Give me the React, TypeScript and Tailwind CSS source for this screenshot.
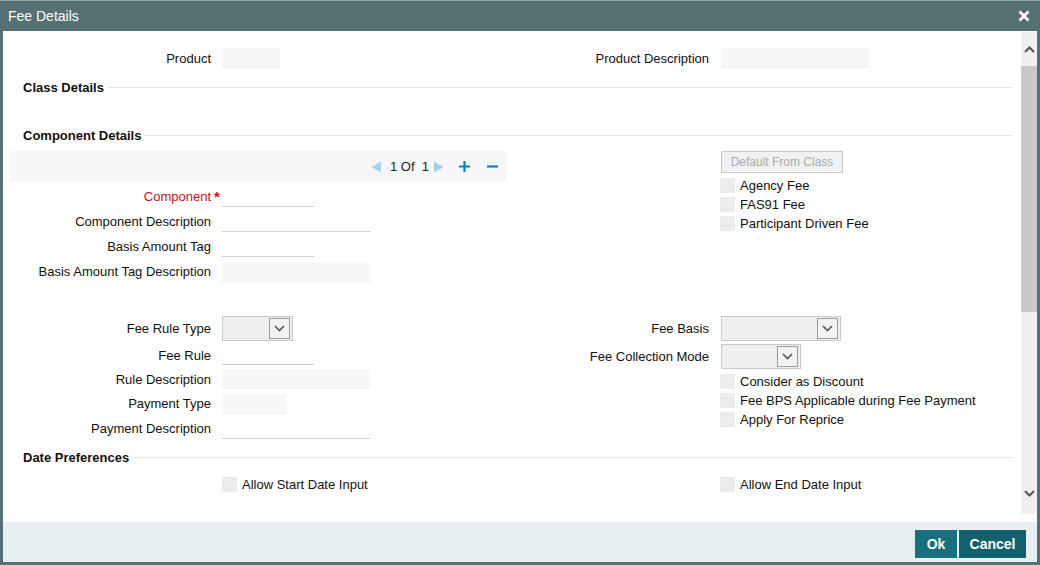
import type { JSX, ReactNode } from 'react';

const font = { fontFamily: '"Liberation Sans", Arial, sans-serif' };

function Label({ children, w }: { children: ReactNode; w: string }): JSX.Element {
  return <div className={`${w} relative shrink-0 pt-[1px] text-right text-[13px] text-[#111]`}>{children}</div>;
}

function LineInput({ w }: { w: string }): JSX.Element {
  return <div className={`${w} h-[20px] border-b border-[#cfcfcf]`} />;
}

function FilledInput({ w }: { w: string }): JSX.Element {
  return <div className={`${w} h-[20px] border-b border-[#efefef] bg-[#f7f7f7]`} />;
}

function Select({ w }: { w: string }): JSX.Element {
  return (
    <div className={`${w} flex h-[25px] items-center justify-end border border-[#c9c9c9] bg-[#efefed] pr-[2px]`}>
      <div className="flex h-[21px] w-[21px] items-center justify-center border border-[#9c9c9c] bg-[#f3f3f3]">
        <svg width="11" height="7" viewBox="0 0 11 7" fill="none">
          <path d="M1 1l4.5 4.5L10 1" stroke="#555" strokeWidth="1.6" />
        </svg>
      </div>
    </div>
  );
}

function Check({ label, ml }: { label: string; ml: string }): JSX.Element {
  return (
    <div className={`flex h-[19px] items-center ${ml}`}>
      <div className="h-[15px] w-[15px] bg-[#ececec]" />
      <span className="ml-[5px] pt-[1px] text-[13px] text-[#111]">{label}</span>
    </div>
  );
}

function Heading({ title, mt }: { title: string; mt: string }): JSX.Element {
  return (
    <div className={`flex h-[16px] items-center pl-[20px] pr-[9px] ${mt}`}>
      <span className="pt-[1px] text-[13px] font-bold text-[#111]">{title}</span>
      <div className="ml-[3px] h-px flex-1 bg-[#e6e6e6]" />
    </div>
  );
}

function Row({ h, children }: { h: string; children: ReactNode }): JSX.Element {
  return <div className={`flex items-center gap-[11px] ${h}`}>{children}</div>;
}

export default function App(): JSX.Element {
  return (
    <div style={font} className="flex h-[565px] w-[1040px] flex-col bg-[#557174] pb-[3px]">
      <div className="flex h-[31px] shrink-0 items-center justify-between border-t border-[#8ea4a8] px-[8px]">
        <span className="text-[14px] text-white">Fee Details</span>
        <svg width="12" height="12" viewBox="0 0 12 12" className="mr-[2px]">
          <path d="M1.5 1.5l9 9M10.5 1.5l-9 9" stroke="#fff" strokeWidth="2.6" />
        </svg>
      </div>

      <div className="mx-[3px] flex h-[491px] bg-white">
        <div className="flex-1">
          <div className="mt-[17px] flex h-[20px] items-center">
            <div className="flex w-[507px] items-center gap-[11px]">
              <Label w="w-[208px]">Product</Label>
              <FilledInput w="w-[58px]" />
            </div>
            <div className="flex items-center gap-[12px]">
              <Label w="w-[199px]">Product Description</Label>
              <FilledInput w="w-[148px]" />
            </div>
          </div>

          <Heading title="Class Details" mt="mt-[11px]" />
          <Heading title="Component Details" mt="mt-[32px]" />

          <div className="mt-[8px] flex">
            <div className="w-[507px]">
              <div className="ml-[7px] flex h-[31px] w-[497px] items-center bg-[#f6f7f8] pl-[361px]">
                <svg width="11" height="12" viewBox="0 0 11 12">
                  <path d="M10 0.5V11.5L0.5 6z" fill="#a3d2ea" />
                </svg>
                <span className="ml-[8px] text-[13px] text-[#222]">1 Of&nbsp; 1</span>
                <svg width="11" height="12" viewBox="0 0 11 12" className="ml-[4px]">
                  <path d="M1 0.5V11.5L10.5 6z" fill="#a3d2ea" />
                </svg>
                <svg width="13" height="13" viewBox="0 0 13 13" className="ml-[14px]">
                  <path d="M6.5 1v11M1 6.5h11" stroke="#127fc3" strokeWidth="2.2" />
                </svg>
                <svg width="13" height="13" viewBox="0 0 13 13" className="ml-[15px]">
                  <path d="M1 6.5h11" stroke="#127fc3" strokeWidth="2.2" />
                </svg>
              </div>
              <div className="mt-[2px]">
                <Row h="h-[25px]">
                  <Label w="w-[208px]">
                    <span className="text-[#dd0a2a]">Component</span>
                    <span className="absolute left-full top-[0px] ml-[3px] text-[15px] font-bold text-[#dd0a2a]">*</span>
                  </Label>
                  <LineInput w="w-[92px]" />
                </Row>
                <Row h="h-[25px]">
                  <Label w="w-[208px]">Component Description</Label>
                  <LineInput w="w-[148px]" />
                </Row>
                <Row h="h-[25px]">
                  <Label w="w-[208px]">Basis Amount Tag</Label>
                  <LineInput w="w-[92px]" />
                </Row>
                <Row h="h-[25px]">
                  <Label w="w-[208px]">Basis Amount Tag Description</Label>
                  <FilledInput w="w-[148px]" />
                </Row>
              </div>
            </div>
            <div className="flex-1">
              <div className="ml-[211px] flex h-[22px] w-[122px] items-center justify-center border border-[#c9c9c9] bg-[#f1f1f1] text-[12px] text-[#ababab]">
                Default From Class
              </div>
              <div className="mt-[3px]">
                <Check ml="ml-[210px]" label="Agency Fee" />
                <Check ml="ml-[210px]" label="FAS91 Fee" />
                <Check ml="ml-[210px]" label="Participant Driven Fee" />
              </div>
            </div>
          </div>

          <div className="mt-[32px] flex">
            <div className="w-[507px]">
              <Row h="h-[25px]">
                <Label w="w-[208px]">Fee Rule Type</Label>
                <Select w="w-[71px]" />
              </Row>
              <div className="mt-[2px]">
                <Row h="h-[24px]">
                  <Label w="w-[208px]">Fee Rule</Label>
                  <LineInput w="w-[92px]" />
                </Row>
                <Row h="h-[24px]">
                  <Label w="w-[208px]">Rule Description</Label>
                  <FilledInput w="w-[148px]" />
                </Row>
                <Row h="h-[25px]">
                  <Label w="w-[208px]">Payment Type</Label>
                  <FilledInput w="w-[64px]" />
                </Row>
                <Row h="h-[25px]">
                  <Label w="w-[208px]">Payment Description</Label>
                  <LineInput w="w-[148px]" />
                </Row>
              </div>
            </div>
            <div className="flex-1">
              <div className="flex h-[25px] items-center gap-[12px]">
                <Label w="w-[199px]">Fee Basis</Label>
                <Select w="w-[120px]" />
              </div>
              <div className="mt-[3px] flex h-[25px] items-center gap-[12px]">
                <Label w="w-[199px]">Fee Collection Mode</Label>
                <Select w="w-[80px]" />
              </div>
              <div className="mt-[2.5px]">
                <Check ml="ml-[210px]" label="Consider as Discount" />
                <Check ml="ml-[210px]" label="Fee BPS Applicable during Fee Payment" />
                <Check ml="ml-[210px]" label="Apply For Reprice" />
              </div>
            </div>
          </div>

          <Heading title="Date Preferences" mt="mt-[8px]" />
          <div className="mt-[9.5px] flex">
            <div className="w-[507px]">
              <Check ml="ml-[219px]" label="Allow Start Date Input" />
            </div>
            <Check ml="ml-[210px]" label="Allow End Date Input" />
          </div>
        </div>

        <div className="mt-[1px] flex h-[482px] w-[16px] flex-col bg-[#f0f0f0]">
          <div className="flex h-[34px] items-center justify-center">
            <svg width="11" height="7" viewBox="0 0 11 7" fill="none">
              <path d="M1 6l4.5-4.5L10 6" stroke="#555" strokeWidth="2" />
            </svg>
          </div>
          <div className="h-[246px] bg-[#c8c8c8]" />
          <div className="flex-1" />
          <div className="flex h-[42px] items-center justify-center">
            <svg width="11" height="7" viewBox="0 0 11 7" fill="none">
              <path d="M1 1l4.5 4.5L10 1" stroke="#555" strokeWidth="2" />
            </svg>
          </div>
        </div>
      </div>

      <div className="mx-[3px] flex h-[40px] justify-end gap-[2px] bg-[#e6f0f3] pr-[11px] pt-[8px]">
        <button className="h-[28px] w-[42px] bg-[#18707e] text-[14px] font-bold text-white">Ok</button>
        <button className="h-[28px] w-[67px] bg-[#14616e] text-[14px] font-bold text-white">Cancel</button>
      </div>
    </div>
  );
}
